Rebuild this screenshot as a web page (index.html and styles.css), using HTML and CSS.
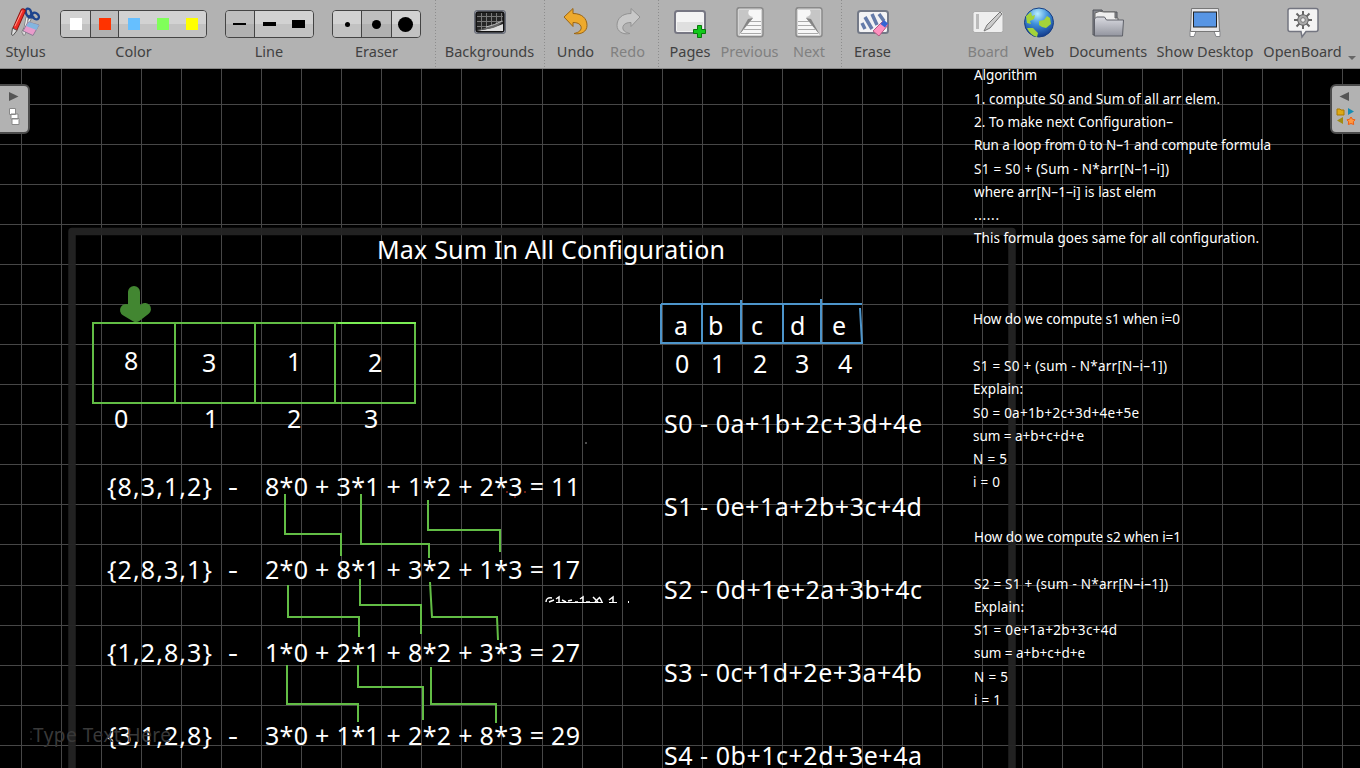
FILE: index.html
```html
<!DOCTYPE html>
<html lang="en">
<head>
<meta charset="utf-8">
<title>OpenBoard</title>
<link rel="stylesheet" href="styles.css">
</head>
<body>
<div class="app">
<header class="toolbar">
  <div class="tool w-stylus"><svg width="30" height="32" viewBox="0 0 30 32"><g stroke-linecap="round" fill="none"><path d="M19 12L12 25M16 11l-3 16" stroke="#777" stroke-width="3"/><path d="M19 12L12 25M16 11l-3 16" stroke="#eee" stroke-width="1.500"/><ellipse cx="17.500" cy="5.500" rx="2.600" ry="4" stroke="#1d438d" stroke-width="2.300" transform="rotate(-18 17.500 5.500)"/><ellipse cx="24.500" cy="9" rx="3.800" ry="2.800" stroke="#1d438d" stroke-width="2.300" transform="rotate(40 24.500 9)"/><path d="M18 10l4 0" stroke="#1d438d" stroke-width="3"/><path d="M12 4L4 22" stroke="#8a1512" stroke-width="5.500"/><path d="M12 4L4 22" stroke="#ef2b25" stroke-width="3.500"/><path d="M11 4L4 19" stroke="#ff9a8c"/></g><path d="M1.500 21l4.500 2.500-4 5-1.500-1z" fill="#ddd" stroke="#555"/><path d="M17 15l11 3-6 10.500-10-4.500z" fill="#e99bcb" stroke="#8c7c94"/><path d="M18 15l10 3-2.500 5-10.500-4z" fill="#83b5df"/></svg><span>Stylus</span></div>
  <div class="tool w-color"><div class="group g-color"><i class="cell c1"><b class="sw white"></b></i><i class="cell c2 on"><b class="sw red"></b></i><i class="cell c3"><b class="sw blue"></b></i><i class="cell c3"><b class="sw green"></b></i><i class="cell c3"><b class="sw yellow"></b></i></div><span>Color</span></div>
  <div class="tool w-line"><div class="group g-line"><i class="cell on sep"><b class="l1"></b></i><i class="cell"><b class="l2"></b></i><i class="cell"><b class="l3"></b></i></div><span>Line</span></div>
  <div class="tool w-eraser"><div class="group g-eraser"><i class="cell sep"><b class="d1"></b></i><i class="cell on sep"><b class="d2"></b></i><i class="cell"><b class="d3"></b></i></div><span>Eraser</span></div>
  <div class="tool w-bg rule"><svg width="32" height="32" viewBox="0 0 32 32"><rect x=".5" y="3.500" width="31" height="23" rx="2.500" fill="#8b8e98" stroke="#696d78"/><rect x="2" y="5" width="28" height="20" rx="2" fill="#252525" stroke="#000"/><path d="M3 9.500h26M3 14.500h26M3 19.500h20M7.500 6v18M12.500 6v18M17.500 6v14M22.500 6v10M27.500 6v8" stroke="#777" fill="none"/><path d="M3 24q14-2 26-7v7z" fill="#ddd"/><path d="M3 23q11-2 26-10-3 6-10 8-8 2-16 2z" fill="#666"/><path d="M12 20q9-2 16-6" stroke="#bbb" fill="none"/></svg><span>Backgrounds</span></div>
  <div class="tool w-undo rule"><svg width="26" height="32" viewBox="0 0 26 32"><path d="M1 10L10 1.500v5c9 0 14 5 14 12 0 6-6 9.500-13 8 5-1 8-3.500 7-7-1-3-4-4-8-4v4z" fill="#eeaa2d" stroke="#9a6515" stroke-linejoin="round"/></svg><span>Undo</span></div>
  <div class="tool w-redo off"><svg width="26" height="32" viewBox="0 0 26 32"><path d="M25 10L16 1.500v5C7 6.500 2 11.500 2 18.500c0 6 6 9.500 13 8-5-1-8-3.500-7-7 1-3 4-4 8-4v4z" fill="#c8c8c8" stroke="#929292" stroke-linejoin="round"/></svg><span>Redo</span></div>
  <div class="tool w-pages rule"><svg width="32" height="32" viewBox="0 0 32 32"><rect x="1" y="4" width="30" height="22" rx="2.500" fill="#f4f4f4" stroke="#777783" stroke-width="2"/><path d="M3 15h26v9H3z" fill="#dfdfdf"/><path d="M23.500 18.500h4v4h4v4h-4v4h-4v-4h-4v-4h4z" fill="#12c91b" stroke="#087a0b"/></svg><span>Pages</span></div>
  <div class="tool w-prev off"><svg width="28" height="32" viewBox="0 0 28 32"><g id="sheet"><rect x="1" y=".7" width="26" height="29" rx="2.500" fill="#d4d4d4" stroke="#8a8a8a" stroke-width="1.500"/><path d="M13 3h12v25H3L17 10q-6-2-5-5z" fill="#f7f7f7"/><path d="M3 28L17 11q-7-3-4-8H3z" fill="#c6c6c6"/><path d="M3 28L17 11l-5 1z" fill="#858585"/><path d="M14 14.500h11M11 18.500h14M8 22.500h17M5 26.500h20" stroke="#aaa"/></g></svg><span>Previous</span></div>
  <div class="tool w-next off"><svg width="28" height="32" viewBox="0 0 28 32"><use href="#sheet" transform="translate(28 0) scale(-1 1)"/></svg><span>Next</span></div>
  <div class="tool w-erase rule"><svg width="32" height="32" viewBox="0 0 32 32"><rect x="1" y="4" width="30" height="22" rx="2.500" fill="#f3f3f5" stroke="#737987" stroke-width="2"/><path d="M5 16l3 6M8 10l7 12M15 7l5 11M22 7l5 7" stroke="#647baa" stroke-width="3.500"/><path d="M26 14l5 4-9 11-6-5z" fill="#ff91c0" stroke="#b65b83"/><path d="M27 13l4 3.500-3 4-4.500-3.500z" fill="#3564d4"/></svg><span>Erase</span></div>
  <div class="tool w-board off"><svg width="32" height="32" viewBox="0 0 32 32"><rect x="1" y="4.500" width="30" height="21" rx="2" fill="#eee" stroke="#aaa"/><path d="M4 7h3v15H4z" fill="#bbb"/><path d="M12 24l3-6L28 5l2 2-12 14z" fill="#ccc" stroke="#777"/></svg><span>Board</span></div>
  <div class="tool w-web"><svg width="32" height="32" viewBox="0 0 32 32"><defs><radialGradient id="sea" cx=".45" cy=".2" r=".9"><stop stop-color="#b9efff"/><stop offset=".4" stop-color="#3f90dc"/><stop offset="1" stop-color="#0a287b"/></radialGradient></defs><circle cx="16" cy="15.500" r="14.500" fill="url(#sea)" stroke="#173e83"/><path d="M3 9l5-4 1 4 3-1-1 4-4 2 1 3-4-1zM16 14l5-1 3-4 3 2 1 6-5 4-4-1-3-2zM4 21l6 0 5 5-1 4q-7-2-10-9z" fill="#a4d339"/></svg><span>Web</span></div>
  <div class="tool w-docs"><svg width="32" height="32" viewBox="0 0 32 32"><defs><linearGradient id="folder" x2="0" y2="1"><stop stop-color="#d9dae0"/><stop offset="1" stop-color="#93959f"/></linearGradient></defs><path d="M1 28V3h9l1 2h14v22z" fill="#85878e" stroke="#52545a"/><path d="M3 24V6q5-3 9-1h11v6h3v10" fill="#eee" stroke="#666"/><path d="M2.500 29V12l2-2h8l2 3h17l-1 16z" fill="url(#folder)" stroke="#5e6068"/></svg><span>Documents</span></div>
  <div class="tool w-desk"><svg width="32" height="32" viewBox="0 0 32 32"><path d="M4 1.500h24l3 24v4h-4l-2-5H7l-2 5H1v-4z" fill="#fff" stroke="#85868a"/><path d="M2.500 1.500h27l1 23h-29z" fill="#e6e6e8" stroke="#777"/><rect x="4.500" y="5" width="23" height="15" fill="#5795e4" stroke="#222"/></svg><span>Show Desktop</span></div>
  <div class="tool w-open"><svg width="32" height="32" viewBox="0 0 32 32"><path d="M3 1.500h26q2 0 2 2v19q0 2-2 2H19l-4 5.500-1-5.500H3q-2 0-2-2v-19q0-2 2-2z" fill="#f4f4f4" stroke="#737580" stroke-width="1.500"/><path d="M16 4v18M7 13h18M9.500 6.500l13 13M22.500 6.500l-13 13" stroke="#666" stroke-width="2"/><circle cx="16" cy="13" r="5.300" fill="#aaa" stroke="#666"/><circle cx="16" cy="13" r="2.300" fill="#eee" stroke="#777"/></svg><span>OpenBoard</span></div>
  <i class="more"></i>
</header>
<main class="board">
<svg class="ink" width="1360" height="699" viewBox="0 69 1360 699">
<path class="grid" d="M21.500 69V768M61.500 69V768M101.500 69V768M141.500 69V768M181.500 69V768M221.500 69V768M261.500 69V768M301.500 69V768M341.500 69V768M381.500 69V768M421.500 69V768M461.500 69V768M501.500 69V768M542.500 69V768M582.500 69V768M622.500 69V768M662.500 69V768M702.500 69V768M742.500 69V768M782.500 69V768M822.500 69V768M862.500 69V768M902.500 69V768M942.500 69V768M982.500 69V768M1022.500 69V768M1062.500 69V768M1102.500 69V768M1142.500 69V768M1182.500 69V768M1222.500 69V768M1262.500 69V768M1302.500 69V768M1342.500 69V768M0 104.500H1360M0 144.500H1360M0 184.500H1360M0 224.500H1360M0 264.500H1360M0 304.500H1360M0 344.500H1360M0 384.500H1360M0 424.500H1360M0 464.500H1360M0 504.500H1360M0 544.500H1360M0 585.500H1360M0 625.500H1360M0 665.500H1360M0 705.500H1360M0 745.500H1360"/>
<path class="frame" d="M72 780V231.500H1012V780"/>
<path class="arrow" d="M134 292V306M126 310L136 316L145 309"/>
<path class="green" d="M92 323H416M93 323V403H415V322M175 323V403M255 323V404M335 323V403M285 494V534H341V556M361 494V544H429V558M428 500V530H500V552M288 585V617H359V637M360 579V605H421V634M430 582L432 617H497L498 640M287 665V704H358V722M358 665V687H423V720M431 667V704H496V723"/>
<path class="bright" d="M338 323H416"/>
<path class="bluebox" d="M661 304H862M661 304V343H862L860 308M702 304V343M741 300V344M783 305V343M821 299V344"/>
<g class="big">
<text x="377" y="259" textLength="348">Max Sum In All Configuration</text>
<text x="124" y="370">8</text><text x="202" y="372">3</text><text x="287" y="371">1</text><text x="368" y="372">2</text>
<text x="114" y="428">0</text><text x="204" y="428">1</text><text x="287" y="428">2</text><text x="364" y="428">3</text>
<text x="674" y="335">a</text><text x="708" y="335">b</text><text x="751" y="335">c</text><text x="790" y="335">d</text><text x="832" y="335">e</text>
<text x="675" y="373">0</text><text x="711" y="373">1</text><text x="753" y="373">2</text><text x="795" y="373">3</text><text x="838" y="373">4</text>
<text x="664" y="433" textLength="258">S0 - 0a+1b+2c+3d+4e</text>
<text x="664" y="516" textLength="258">S1 - 0e+1a+2b+3c+4d</text>
<text x="664" y="599" textLength="258">S2 - 0d+1e+2a+3b+4c</text>
<text x="664" y="682" textLength="258">S3 - 0c+1d+2e+3a+4b</text>
<text x="664" y="765" textLength="258">S4 - 0b+1c+2d+3e+4a</text>
<text x="107" y="496" textLength="105">{8,3,1,2}</text><text x="228" y="496" textLength="10" lengthAdjust="spacingAndGlyphs">-</text><text x="265" y="496" textLength="315">8*0 + 3*1 + 1*2 + 2*3 = 11</text>
<text x="107" y="579" textLength="105">{2,8,3,1}</text><text x="228" y="579" textLength="10" lengthAdjust="spacingAndGlyphs">-</text><text x="265" y="579" textLength="315">2*0 + 8*1 + 3*2 + 1*3 = 17</text>
<text x="107" y="662" textLength="105">{1,2,8,3}</text><text x="228" y="662" textLength="10" lengthAdjust="spacingAndGlyphs">-</text><text x="265" y="662" textLength="315">1*0 + 2*1 + 8*2 + 3*3 = 27</text>
<text x="107" y="745" textLength="105">{3,1,2,8}</text><text x="228" y="745" textLength="10" lengthAdjust="spacingAndGlyphs">-</text><text x="265" y="745" textLength="315">3*0 + 1*1 + 2*2 + 8*3 = 29</text>
</g>
<text class="hint" x="33" y="742" textLength="138">Type Text Here</text>
<path d="M31 731v2M31 738v2" stroke="#333"/>
<g class="small">
<text x="974" y="80" textLength="63">Algorithm</text>
<text x="974" y="104" textLength="246">1. compute S0 and Sum of all arr elem.</text>
<text x="974" y="127" textLength="199">2. To make next Configuration–</text>
<text x="974" y="150" textLength="297">Run a loop from 0 to N–1 and compute formula</text>
<text x="974" y="174" textLength="195">S1 = S0 + (Sum - N*arr[N–1–i])</text>
<text x="974" y="197" textLength="182">where arr[N–1–i] is last elem</text>
<text x="974" y="220" textLength="25">......</text>
<text x="974" y="243" textLength="285">This formula goes same for all configuration.</text>
<text x="973" y="324" textLength="207">How do we compute s1 when i=0</text>
<text x="973" y="371" textLength="194">S1 = S0 + (sum - N*arr[N–i–1])</text>
<text x="973" y="394" textLength="50">Explain:</text>
<text x="973" y="418" textLength="166">S0 = 0a+1b+2c+3d+4e+5e</text>
<text x="973" y="441" textLength="111">sum = a+b+c+d+e</text>
<text x="973" y="464" textLength="34">N = 5</text>
<text x="973" y="487" textLength="27">i = 0</text>
<text x="974" y="542" textLength="207">How do we compute s2 when i=1</text>
<text x="974" y="589" textLength="194">S2 = S1 + (sum - N*arr[N–i–1])</text>
<text x="974" y="612" textLength="50">Explain:</text>
<text x="974" y="635" textLength="143">S1 = 0e+1a+2b+3c+4d</text>
<text x="974" y="658" textLength="111">sum = a+b+c+d+e</text>
<text x="974" y="682" textLength="34">N = 5</text>
<text x="974" y="705" textLength="27">i = 1</text>
</g>
<path class="scrap" d="M546 602q0-5 6-4M549 602l5-2M556 599l3-2v5M562 600l4 2M568 601l4-1M580 599l3-2v5M575 602h3M586 602h4M593 597l5 5M600 597l-5 5M600 598l2 4M609 600l4-3v5"/><path d="M556 602.500h47M609 602.500h8M628.500 601v2" stroke="#fff"/>
<path d="M585 443h2" stroke="#999"/><path d="M506 492h2M514 497h2M524 492h2" stroke="#6c1d13" stroke-width="2"/>
</svg>
<div class="tab left"><svg width="28" height="46" viewBox="0 2 28 46"><path d="M9 8L18.500 12.500L9 17z" fill="#555"/><g fill="#fff" stroke="#888"><path d="M9.500 24.500h6v6h-6zM11 30h7v5h-7zM12 34.500h7v6H12z"/></g></svg></div>
<div class="tab right"><svg width="28" height="46" viewBox="2 2 28 46"><path d="M19 8L9.500 12.500L19 17z" fill="#555"/><path d="M7 25h3l1 1h3v5H7z" fill="#dda915" stroke="#a97800"/><path d="M18 24l6 3.500-6 3.500z" fill="#168bb2"/><path d="M13 33v7l-6-3.500z" fill="#a18a10"/><path d="M21 33l1.500 2.300 2.500.5-1.700 2 .4 2.700-2.700-1-2.700 1 .4-2.700-1.700-2 2.500-.5z" fill="#ff9840" stroke="#ed5d13"/></svg></div>
</main>
</div>
</body>
</html>
```
FILE: styles.css
```css
body{margin:0;background:#000}
.app{width:1360px;height:768px;overflow:hidden;display:flex;flex-direction:column}
.toolbar{height:69px;box-sizing:border-box;background:#b2b2b2;border-bottom:1px solid #888;display:flex;position:relative;flex:none;font:14.500px/20px "Noto Sans",sans-serif;color:#414141}
.tool{display:flex;flex-direction:column;align-items:center;padding-top:7px;height:61px;box-sizing:content-box;flex:none;white-space:nowrap}
.tool>svg{display:block;height:32px;margin-bottom:2px}
.off{color:#808080}
.rule{background:repeating-linear-gradient(#8d8d8d 0 1px,transparent 1px 3px) left top/1px 100% no-repeat}
.w-stylus{width:51px}.w-color{width:165px}.w-line{width:106px}.w-eraser{width:109px;margin-right:4px}
.w-bg{width:109px}.w-undo{width:63px}.w-redo{width:41px;margin-right:10px}.w-pages{width:64px}.w-prev{width:55px}.w-next{width:64px}.w-erase{width:63px}
.w-board{width:60px;margin-left:54px}.w-web{width:42px}.w-docs{width:96px}.w-desk{width:98px}.w-open{width:97px}
.group{height:28px;box-sizing:border-box;border:1px solid #444;border-radius:4px;display:flex;overflow:hidden;margin:3px 0}
.g-color{width:147px}.g-line,.g-eraser{width:89px}
.cell{flex:1;display:flex;align-items:center;justify-content:center;background:linear-gradient(#d2d2d2 50%,#c2c2c2 50%)}
.on{background:linear-gradient(#bebebe 50%,#b1b1b1 50%)}
.sep{border-right:1px solid #444}
.c1{flex:0 0 29px;border-right:1px solid #444}.c2{flex:0 0 27px;border-right:1px solid #444}
.sw{width:12px;height:12px}
.white{background:#fff}.red{background:#f30}.blue{background:#66bfff}.green.sw{background:#80ff59}.yellow{background:#ff0}
.l1,.l2,.l3,.d1,.d2,.d3{background:#000}
.l1{width:13px;height:2px}.l2{width:13px;height:4px}.l3{width:13px;height:8px}
.d1,.d2,.d3{border-radius:50%}
.d1{width:5px;height:5px}.d2{width:9px;height:9px}.d3{width:15px;height:15px}
.more{position:absolute;left:1348px;top:56px;border:4px solid transparent;border-top-color:#666;border-bottom:0}
.board{height:699px;position:relative;overflow:hidden}
.ink{display:block}
.grid{stroke:#fff;stroke-opacity:.28;fill:none;shape-rendering:crispEdges}
.frame{stroke:#232323;stroke-opacity:.96;stroke-width:7.500;fill:none;stroke-linejoin:round}
.arrow{stroke:#428631;stroke-width:12;stroke-linecap:round;stroke-linejoin:round;fill:none}
.green{stroke:#62bd45;stroke-width:2;fill:none}
.bright{stroke:#7bee55;stroke-width:2}
.bluebox{stroke:#4d95cb;stroke-width:2;fill:none}
.big{font:25px "Noto Sans",sans-serif;fill:#fff}
.small{font:13.500px "Noto Sans",sans-serif;fill:#fff}
.hint{font:19px "Noto Sans",sans-serif;fill:#393939}
.scrap{stroke:#fff;stroke-width:1.500;fill:none}
.tab{position:absolute;top:15px;width:28px;height:46px;background:#b2b2b2;border:2px solid #4b4b4b}
.tab svg{display:block}
.left{left:-2px;border-radius:0 6px 6px 0}
.right{right:-2px;border-radius:6px 0 0 6px}
```
